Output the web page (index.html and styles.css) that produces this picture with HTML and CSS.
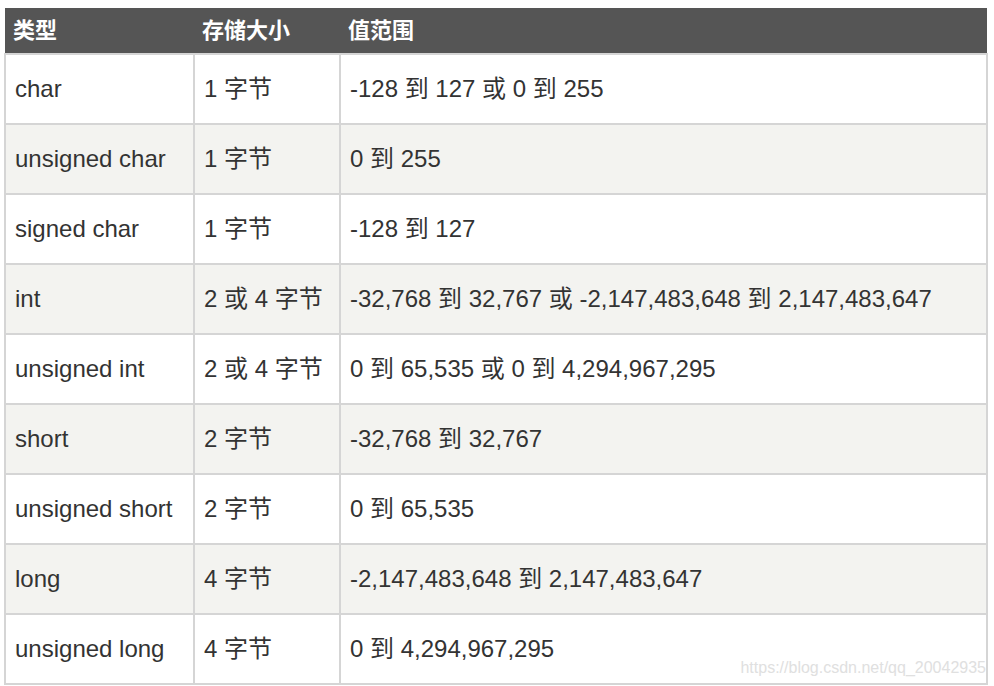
FILE: index.html
```html
<!DOCTYPE html>
<html lang="zh">
<head>
<meta charset="utf-8">
<link rel="stylesheet" href="styles.css">
</head>
<body>
<div class="wrap">
<table class="types">
<colgroup><col class="c1"><col class="c2"><col class="c3"></colgroup>
<thead>
<tr><th>类型</th><th>存储大小</th><th>值范围</th></tr>
</thead>
<tbody>
<tr><td>char</td><td>1 字节</td><td>-128 到 127 或 0 到 255</td></tr>
<tr><td>unsigned char</td><td>1 字节</td><td>0 到 255</td></tr>
<tr><td>signed char</td><td>1 字节</td><td>-128 到 127</td></tr>
<tr><td>int</td><td>2 或 4 字节</td><td>-32,768 到 32,767 或 -2,147,483,648 到 2,147,483,647</td></tr>
<tr><td>unsigned int</td><td>2 或 4 字节</td><td>0 到 65,535 或 0 到 4,294,967,295</td></tr>
<tr><td>short</td><td>2 字节</td><td>-32,768 到 32,767</td></tr>
<tr><td>unsigned short</td><td>2 字节</td><td>0 到 65,535</td></tr>
<tr><td>long</td><td>4 字节</td><td>-2,147,483,648 到 2,147,483,647</td></tr>
<tr><td>unsigned long</td><td>4 字节</td><td>0 到 4,294,967,295</td></tr>
</tbody>
</table>
<span class="mark">https://blog.csdn.net/qq_20042935</span>
</div>
</body>
</html>
```
FILE: styles.css
```css
html, body { margin: 0; padding: 0; background: #fff; }
body { padding: 8px 6px 0 4px; }
.wrap { position: relative; width: 984px; }
.types {
  width: 984px;
  border-collapse: collapse;
  table-layout: fixed;
  font-family: "Liberation Sans", "Noto Sans CJK SC", sans-serif;
  font-size: 24px;
  color: #333;
}
.c1 { width: 189px; }
.c2 { width: 146px; }
.types th {
  background: #555;
  color: #fff;
  font-weight: bold;
  text-align: left;
  height: 45px;
  line-height: 30px;
  padding: 0 0 0 8px;
  font-size: 22px;
}
.types td {
  height: 68px;
  line-height: 30px;
  padding: 0 0 0 9px;
  border: 2px solid #d5d5d5;
  white-space: nowrap;
  vertical-align: middle;
}
.types tbody tr:nth-child(even) td { background: #f3f3f0; }
.mark {
  position: absolute;
  right: 2px;
  bottom: 8px;
  font-family: "Liberation Sans", sans-serif;
  font-size: 16px;
  color: #e0e0e0;
}
```
